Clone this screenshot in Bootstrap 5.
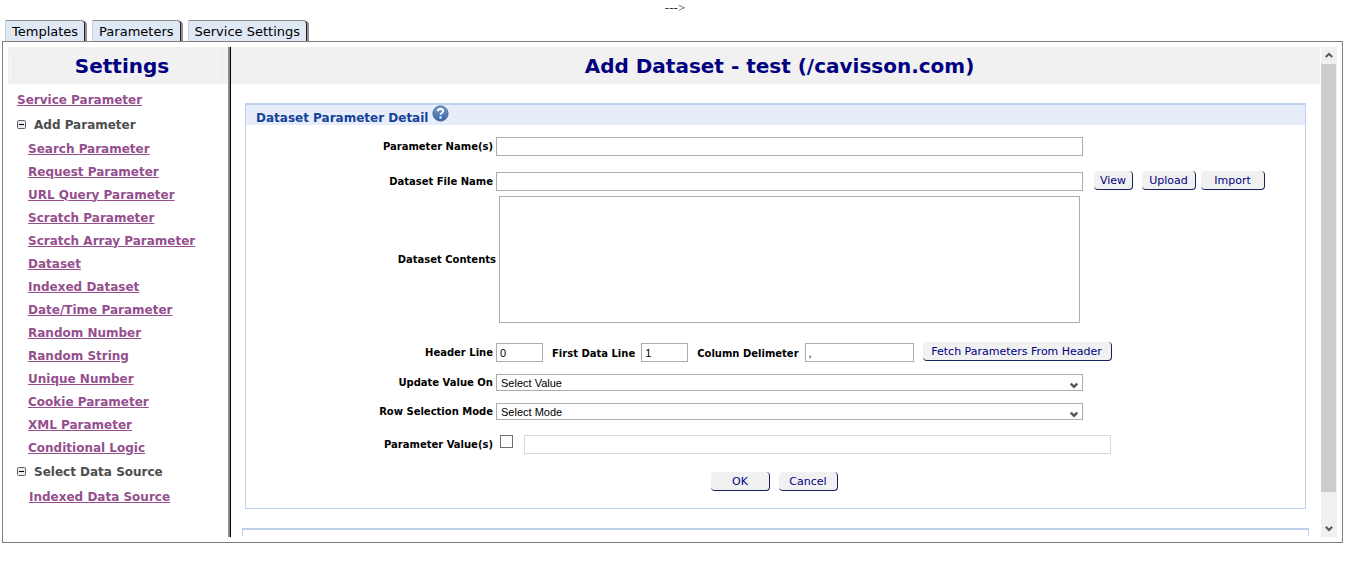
<!DOCTYPE html>
<html lang="en">
<head>
<meta charset="utf-8">
<meta name="viewport" content="width=device-width, initial-scale=1">
<title>Service Settings</title>
<link href="https://cdn.jsdelivr.net/npm/bootstrap@5.3.0/dist/css/bootstrap.min.css" rel="stylesheet">
<style>
  body { font-family: Verdana, "DejaVu Sans", sans-serif; font-size: 12px; line-height: 16px; color: #000; background: #fff; }
  .page-shell { padding: 0 23px 0 2px; }
  .stray-text { font: 13px/16px "Liberation Serif", serif; color: #333; height: 20px; padding-left: 5px; }
  .tab-strip { gap: 5px; padding-left: 3px; }
  .tab-link { height: 21px; padding: 0 6px; margin-right: 2px; font-size: 13px; line-height: 21px; color: #000; text-decoration: none;
    background: #dfe9f5; border: 1px solid #8c8c8c; border-left-color: #d0d0d0; border-right-color: #222; border-bottom: 0; border-top-right-radius: 4px; box-shadow: 2px 1px 0 #8f8f8f; }
  .work-frame { border: 1px solid #7f7f7f; padding: 5px; background: #fff; position: relative; }
  .side-pane { width: 220px; flex: none; }
  .band { height: 37px; background: #f1f1f1; display: flex; align-items: center; justify-content: center; }
  .band h1 { font-size: 20px; line-height: 28px; font-weight: bold; color: #000080; margin: 0; padding: 1px 0 0 8px; }
  .side-pane .band { padding: 5px; }
  .side-pane .band h1 { flex: 1; text-align: center; border: solid #ece9d8; border-width: 0 1px; }
  .side-list { font-weight: bold; padding: 3px 0 28px 9px; }
  .side-list a { color: #954f8e; text-decoration: underline; }
  .lvl-top { height: 25px; display: flex; align-items: center; color: #4d4d4d; gap: 8px; }
  .lvl-sub { height: 23px; display: flex; align-items: center; padding-left: 11px; }
  .splitter { width: 3px; flex: none; background: linear-gradient(to right, #8a8a8a 2px, #000 2px); }
  .main-pane { min-width: 0; }
  .detail-panel { margin: 19px 14px 0; border: 1px solid #bdd0ec; border-top-width: 2px; }
  .detail-panel h2 { height: 20px; margin: 0; padding-left: 10px; background: #e7eefa; color: #15429b; font-size: 12px; line-height: 26px; font-weight: bold; gap: 4px; }
  .form-area { padding: 12px 0 17px; }
  .form-line { display: grid; grid-template-columns: 250px minmax(0, 1fr) 222px; align-items: center; }
  .form-line > label, .cap { font-size: 10px; line-height: 16px; font-weight: bold; white-space: nowrap; }
  .form-line > label { text-align: right; padding: 1px 3px 0 0; }
  .cap { margin: 0 6px 0 9px; }
  .gap-a { margin-bottom: 15px; }
  .gap-b { margin-bottom: 5px; }
  .gap-c { margin-bottom: 19px; }
  .gap-d { margin-bottom: 12px; }
  .gap-e { margin-bottom: 15px; }
  .box { font-family: "Liberation Sans", sans-serif; font-size: 11px; line-height: 15px; color: #000; background: #fff; border: 1px solid #abadb3; border-radius: 0; padding: 0 3px; height: 19px; width: 100%; min-width: 0; }
  .box-short { width: 47px; flex: none; }
  .box-mid { width: 109px; flex: none; }
  .box:disabled { border-color: #d9d9d9; background: #fff; }
  .box-area { height: 127px; margin: 0 3px; width: auto; justify-self: stretch; resize: none; display: block; }
  .form-line > .area-label { padding-right: 0; }
  select.box { height: 17px; appearance: none; padding-left: 4px; line-height: 14px;
    background: #fff url("data:image/svg+xml,%3Csvg xmlns='http://www.w3.org/2000/svg' width='8' height='7'%3E%3Cpath d='M.8 1.5 4 4.8 7.2 1.5' fill='none' stroke='%23555' stroke-width='2.4'/%3E%3C/svg%3E") no-repeat right 4px top 7px; }
  .tick { appearance: none; width: 13px; height: 13px; border: 1px solid #707070; background: #fff; margin: 0 11px 0 4px; flex: none; align-self: flex-start; }
  .tick:checked { background: #707070; }
  .value-line { grid-template-columns: 250px minmax(0, 1fr) 194px; }
  .button-line { height: 20px; }
  .button-line .box { align-self: end; }
  .button-line > div { align-self: start; padding-left: 11px; }
  .push { height: 19px; padding: 0 4px; font-size: 11px; line-height: 20px; color: #000080; background: #f1f1f1; border: 0; border-right: 1px solid #14235a; border-bottom: 1px solid #14235a; border-radius: 4px; white-space: nowrap; flex: none; }
  .push-fetch { width: 189px; margin-left: 9px; align-self: start; }
  .push-view { width: 39px; margin-right: 9px; }
  .push-upload { width: 54px; margin-right: 5px; }
  .push-wide { width: 64px; }
  .push-mid { width: 59px; }
  .header-line { height: 20px; }
  .action-line { gap: 9px; padding: 18px 2px 0 0; }
  .next-panel { margin: 19px 11px 0; height: 8px; border: 1px solid #bdd0ec; border-top-width: 2px; border-bottom: 0; }
  .scroll-rail { width: 16px; flex: none; background: #f0f0f0; margin-left: 1px; display: flex; flex-direction: column; align-items: center; }
  .scroll-rail button { border: 0; padding: 0; background: none; height: 17px; width: 16px; display: flex; align-items: center; justify-content: center; }
  .scroll-thumb { flex: 428 1 0; width: 15px; align-self: flex-start; background: #cdcdcd; }
  .scroll-rest { flex: 28 1 0; }
</style>
</head>
<body>
<div class="page-shell">
  <div class="stray-text text-center">---&gt;</div>
  <nav class="tab-strip d-flex" aria-label="Sections">
    <a class="tab-link" href="#templates">Templates</a>
    <a class="tab-link" href="#parameters">Parameters</a>
    <a class="tab-link" href="#settings">Service Settings</a>
  </nav>

  <div class="work-frame d-flex">
    <aside class="side-pane">
      <div class="band"><h1>Settings</h1></div>
      <div class="side-list">
        <div class="lvl-top"><a href="#sp">Service Parameter</a></div>
        <div class="lvl-top">
          <svg width="9" height="9" viewBox="0 0 9 9" aria-hidden="true"><rect x=".5" y=".5" width="8" height="8" rx="1" fill="#eeece6" stroke="#536078"/><path d="M2 4.5h5" stroke="#000"/></svg>
          <span>Add Parameter</span>
        </div>
        <div class="lvl-sub"><a href="#p1">Search Parameter</a></div>
        <div class="lvl-sub"><a href="#p2">Request Parameter</a></div>
        <div class="lvl-sub"><a href="#p3">URL Query Parameter</a></div>
        <div class="lvl-sub"><a href="#p4">Scratch Parameter</a></div>
        <div class="lvl-sub"><a href="#p5">Scratch Array Parameter</a></div>
        <div class="lvl-sub"><a href="#p6">Dataset</a></div>
        <div class="lvl-sub"><a href="#p7">Indexed Dataset</a></div>
        <div class="lvl-sub"><a href="#p8">Date/Time Parameter</a></div>
        <div class="lvl-sub"><a href="#p9">Random Number</a></div>
        <div class="lvl-sub"><a href="#p10">Random String</a></div>
        <div class="lvl-sub"><a href="#p11">Unique Number</a></div>
        <div class="lvl-sub"><a href="#p12">Cookie Parameter</a></div>
        <div class="lvl-sub"><a href="#p13">XML Parameter</a></div>
        <div class="lvl-sub"><a href="#p14">Conditional Logic</a></div>
        <div class="lvl-top">
          <svg width="9" height="9" viewBox="0 0 9 9" aria-hidden="true"><rect x=".5" y=".5" width="8" height="8" rx="1" fill="#eeece6" stroke="#536078"/><path d="M2 4.5h5" stroke="#000"/></svg>
          <span>Select Data Source</span>
        </div>
        <div class="lvl-top ps-2 ms-1"><a href="#ids">Indexed Data Source</a></div>
      </div>
    </aside>
    <div class="splitter"></div>

    <main class="main-pane flex-fill">
      <div class="band"><h1>Add Dataset - test (/cavisson.com)</h1></div>
      <section class="detail-panel">
        <h2 class="d-flex">
          <span>Dataset Parameter Detail</span>
          <svg width="17" height="17" viewBox="0 0 17 17" role="img" aria-label="Help">
            <defs><linearGradient id="helpFill" x1="0" y1="0" x2="0" y2="1"><stop offset="0" stop-color="#7fa3cf"/><stop offset="1" stop-color="#2f62a5"/></linearGradient></defs>
            <circle cx="8.5" cy="8.5" r="7.6" fill="url(#helpFill)" stroke="#4a688e"/>
            <path d="M5.8 6.2C6 3.2 11.2 3.3 11 6.3c-.1 1.8-2.5 1.7-2.5 3.5" fill="none" stroke="#fff" stroke-width="1.9"/>
            <circle cx="8.5" cy="12.5" r="1.2" fill="#fff"/>
          </svg>
        </h2>
        <form class="form-area" onsubmit="return false">
          <div class="form-line gap-a">
            <label for="pname">Parameter Name(s)</label>
            <input class="box" id="pname" type="text">
          </div>
          <div class="form-line button-line gap-b">
            <label for="fname">Dataset File Name</label>
            <input class="box" id="fname" type="text">
            <div class="d-flex">
              <button class="push push-view" type="button">View</button>
              <button class="push push-upload" type="button">Upload</button>
              <button class="push push-wide" type="button">Import</button>
            </div>
          </div>
          <div class="form-line gap-c">
            <label class="area-label" for="contents">Dataset Contents</label>
            <textarea class="box box-area" id="contents"></textarea>
          </div>
          <div class="form-line header-line gap-d">
            <label for="hline">Header Line</label>
            <div class="d-flex align-items-end header-line">
              <input class="box box-short" id="hline" type="text" value="0">
              <label class="cap" for="dline">First Data Line</label>
              <input class="box box-short" id="dline" type="text" value="1">
              <label class="cap" for="delim">Column Delimeter</label>
              <input class="box box-mid" id="delim" type="text" value=",">
              <button class="push push-fetch" type="button">Fetch Parameters From Header</button>
            </div>
          </div>
          <div class="form-line gap-d">
            <label for="upd">Update Value On</label>
            <select class="box" id="upd"><option>Select Value</option></select>
          </div>
          <div class="form-line gap-e">
            <label for="mode">Row Selection Mode</label>
            <select class="box" id="mode"><option>Select Mode</option></select>
          </div>
          <div class="form-line value-line">
            <label for="usevals">Parameter Value(s)</label>
            <div class="d-flex">
              <input class="tick" id="usevals" type="checkbox">
              <input class="box" type="text" aria-label="Parameter values" disabled>
            </div>
          </div>
          <div class="action-line d-flex justify-content-center">
            <button class="push push-mid" type="submit">OK</button>
            <button class="push push-mid" type="button">Cancel</button>
          </div>
        </form>
      </section>
      <section class="next-panel" aria-label="Next section"></section>
    </main>

    <div class="scroll-rail">
      <button type="button" aria-label="Scroll up"><svg width="8" height="7" viewBox="0 0 8 7"><path d="M.8 5 4 1.8 7.2 5" fill="none" stroke="#555" stroke-width="2"/></svg></button>
      <div class="scroll-thumb"></div>
      <div class="scroll-rest"></div>
      <button type="button" aria-label="Scroll down"><svg width="8" height="7" viewBox="0 0 8 7"><path d="M.8 1.8 4 5 7.2 1.8" fill="none" stroke="#555" stroke-width="2"/></svg></button>
    </div>
  </div>
</div>
<script src="https://cdn.jsdelivr.net/npm/bootstrap@5.3.0/dist/js/bootstrap.bundle.min.js"></script>
</body>
</html>
